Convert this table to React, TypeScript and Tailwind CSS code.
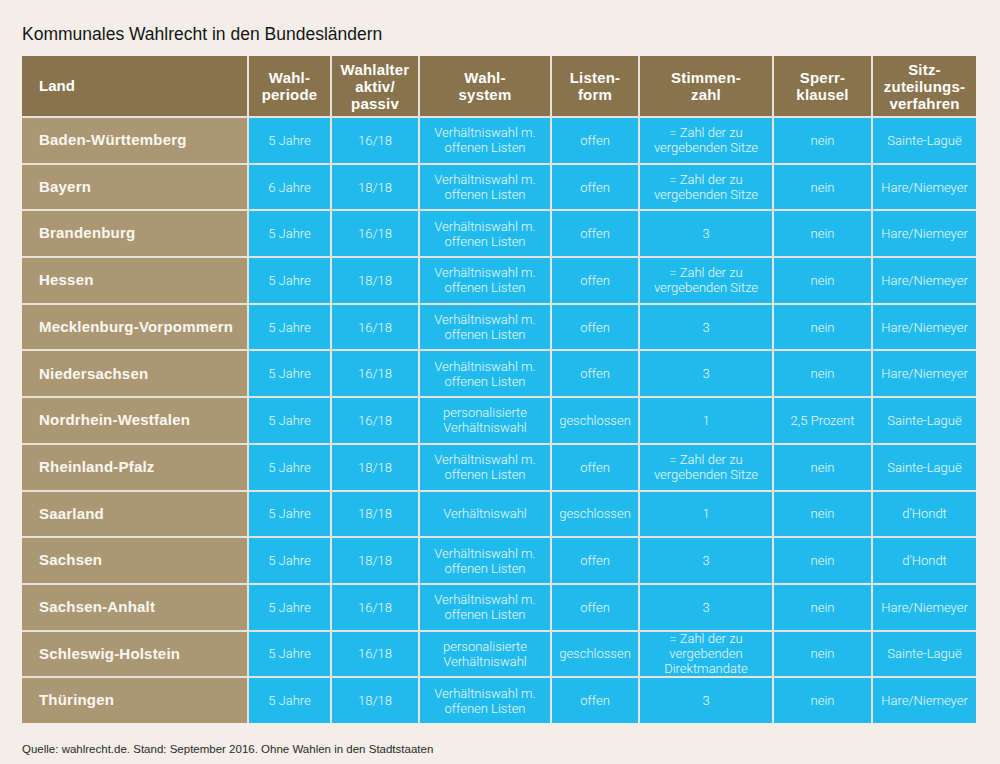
import React from "react";

type Row = [string, string, string, string, string, string, string, string];

const rows: Row[] = [
  ["Baden-Württemberg", "5 Jahre", "16/18", "Verhältniswahl m.\noffenen Listen", "offen", "= Zahl der zu\nvergebenden Sitze", "nein", "Sainte-Laguë"],
  ["Bayern", "6 Jahre", "18/18", "Verhältniswahl m.\noffenen Listen", "offen", "= Zahl der zu\nvergebenden Sitze", "nein", "Hare/Niemeyer"],
  ["Brandenburg", "5 Jahre", "16/18", "Verhältniswahl m.\noffenen Listen", "offen", "3", "nein", "Hare/Niemeyer"],
  ["Hessen", "5 Jahre", "18/18", "Verhältniswahl m.\noffenen Listen", "offen", "= Zahl der zu\nvergebenden Sitze", "nein", "Hare/Niemeyer"],
  ["Mecklenburg-Vorpommern", "5 Jahre", "16/18", "Verhältniswahl m.\noffenen Listen", "offen", "3", "nein", "Hare/Niemeyer"],
  ["Niedersachsen", "5 Jahre", "16/18", "Verhältniswahl m.\noffenen Listen", "offen", "3", "nein", "Hare/Niemeyer"],
  ["Nordrhein-Westfalen", "5 Jahre", "16/18", "personalisierte\nVerhältniswahl", "geschlossen", "1", "2,5 Prozent", "Sainte-Laguë"],
  ["Rheinland-Pfalz", "5 Jahre", "18/18", "Verhältniswahl m.\noffenen Listen", "offen", "= Zahl der zu\nvergebenden Sitze", "nein", "Sainte-Laguë"],
  ["Saarland", "5 Jahre", "18/18", "Verhältniswahl", "geschlossen", "1", "nein", "d’Hondt"],
  ["Sachsen", "5 Jahre", "18/18", "Verhältniswahl m.\noffenen Listen", "offen", "3", "nein", "d’Hondt"],
  ["Sachsen-Anhalt", "5 Jahre", "16/18", "Verhältniswahl m.\noffenen Listen", "offen", "3", "nein", "Hare/Niemeyer"],
  ["Schleswig-Holstein", "5 Jahre", "16/18", "personalisierte\nVerhältniswahl", "geschlossen", "= Zahl der zu\nvergebenden\nDirektmandate", "nein", "Sainte-Laguë"],
  ["Thüringen", "5 Jahre", "18/18", "Verhältniswahl m.\noffenen Listen", "offen", "3", "nein", "Hare/Niemeyer"],
];

const headers = ["Wahl-\nperiode", "Wahlalter\naktiv/\npassiv", "Wahl-\nsystem", "Listen-\nform", "Stimmen-\nzahl", "Sperr-\nklausel", "Sitz-\nzuteilungs-\nverfahren"];

export default function App() {
  return (
    <div className="w-[1000px] h-[764px] bg-[#f3efe8] px-[22px] pt-[24px] font-['Liberation_Sans',Arial,sans-serif] overflow-hidden">
      <h1 className="text-[17.5px] leading-[20px] text-[#151515] mb-[12px]">Kommunales Wahlrecht in den Bundesländern</h1>
      <div className="grid grid-cols-[225px_81px_86px_130px_86px_132px_97px_103px] grid-rows-[60px_repeat(13,44.69px)] gap-[2px] bg-[#e7e3dc] w-[954px]">
        <div className="bg-[#88734c] text-white font-bold text-[15px] flex items-center pl-[17px] pt-[1px]">Land</div>
        {headers.map((h, i) => (
          <div key={i} className="bg-[#88734c] text-white font-bold text-[15px] leading-[17px] tracking-[0.2px] flex items-center justify-center text-center whitespace-pre-line">
            {h}
          </div>
        ))}
        {rows.map((r, ri) => (
          <React.Fragment key={ri}>
            <div className="bg-[#ac9775] text-[#faf7f1] font-bold text-[15px] tracking-[0.2px] flex items-center pl-[17px]">{r[0]}</div>
            {r.slice(1).map((c, ci) => (
              <div key={ci} className="bg-[#20baec] text-[#eef9fe] font-['Roboto',sans-serif] font-light text-[13px] leading-[15px] flex items-center justify-center text-center whitespace-pre-line">
                {c}
              </div>
            ))}
          </React.Fragment>
        ))}
      </div>
      <p className="mt-[19px] text-[11.5px] leading-[14px] text-[#2a2a2a]">Quelle: wahlrecht.de. Stand: September 2016. Ohne Wahlen in den Stadtstaaten</p>
    </div>
  );
}
